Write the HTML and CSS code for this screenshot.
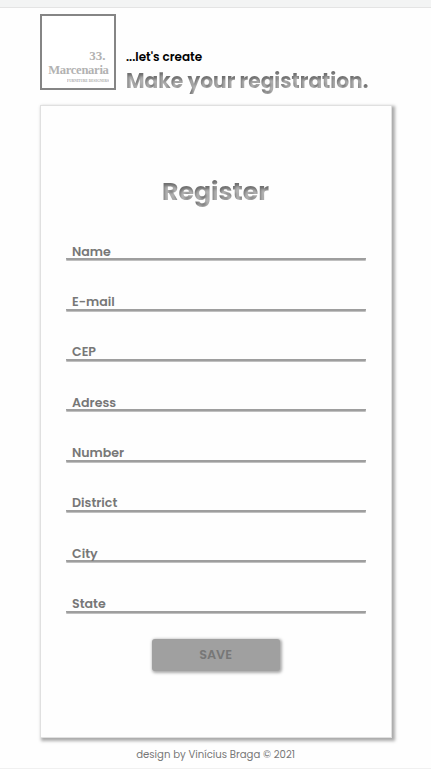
FILE: index.html
```html
<!DOCTYPE html>
<html lang="en">
<head>
<meta charset="utf-8">
<meta name="viewport" content="width=device-width, initial-scale=1">
<title>Marcenaria - Register</title>
<link rel="stylesheet" href="styles.css">
</head>
<body>
<div class="topbar"></div>
<div class="page">
  <header class="header">
    <div class="logo">
      <span class="logo-number">33.</span>
      <span class="logo-name">Marcenaria</span>
      <svg class="logo-tag" viewBox="0 0 42 4"><text x="0" y="3.2" textLength="42" lengthAdjust="spacingAndGlyphs">FURNITURE DESIGNERS</text></svg>
    </div>
    <div class="intro">
      <p class="lead">...let's create</p>
      <h1 class="title"><span>Make your registration.</span></h1>
    </div>
  </header>
  <main class="card">
    <h2 class="heading"><span>Register</span></h2>
    <form class="form">
      <div class="field"><label>Name</label></div>
      <div class="field"><label>E-mail</label></div>
      <div class="field"><label>CEP</label></div>
      <div class="field"><label>Adress</label></div>
      <div class="field"><label>Number</label></div>
      <div class="field"><label>District</label></div>
      <div class="field"><label>City</label></div>
      <div class="field"><label>State</label></div>
      <button class="save" type="button">SAVE</button>
    </form>
  </main>
  <footer class="footer">design by Vinícius Braga © 2021</footer>
</div>
<div class="baseline"></div>
</body>
</html>
```
FILE: styles.css
```css
* { box-sizing: border-box; margin: 0; padding: 0; }
body {
  height: 769px;
  overflow: hidden;
  background: #fefefe;
  font-family: Poppins, Inter, sans-serif;
  color: #777;
}
.topbar { height: 8px; background: #f3f4f4; border-bottom: 1px solid #e4e4e4; }
.page { height: 760px; width: 352px; margin-left: 39.6px; }
.baseline { height: 1px; background: #f0f0f0; }
.header { display: flex; height: 97px; padding-top: 6px; }
.logo {
  width: 76px;
  height: 76px;
  border: 2px solid #858585;
  background: #fff;
  display: flex;
  flex-direction: column;
  align-items: flex-end;
  padding: 32px 5px 0 0;
  font-family: "Liberation Serif", serif;
  font-weight: 700;
  color: #b2b2b2;
}
.logo-number { font-size: 13px; line-height: 15px; padding-right: 3px; }
.logo-name { font-size: 12.6px; line-height: 14px; letter-spacing: -.3px; }
.logo-tag { width: 42px; height: 4px; margin-top: 2px; font-size: 3px; fill: #aaa; }
.intro { margin-left: 10.4px; padding-top: 34px; white-space: nowrap; }
.lead { font-size: 12px; line-height: 18px; font-weight: 600; color: #000; }
.title { font-size: 20.2px; line-height: 31px; font-weight: 700; }
.title span, .heading span {
  display: inline-block;
  background: #6e6e6e;
  -webkit-background-clip: text;
  background-clip: text;
  color: transparent;
  text-shadow: 1px 3px 3px rgba(255, 255, 255, .5);
}
.card {
  height: 633px;
  border: 1px solid #e0e0e0;
  background: #fefefe;
  box-shadow: 2px 2px 3px 1px #aaa;
  padding: 69px 25px 0;
}
.heading { text-align: center; font-size: 25.2px; line-height: 34px; font-weight: 700; }
.form { display: flex; flex-direction: column; padding-top: 1px; }
.field {
  height: 50.35px;
  display: flex;
  align-items: flex-end;
  border-bottom: 2px solid #9e9e9e;
  border-radius: 1px;
  box-shadow: 0 1px 0 #c0c0c0;
  padding-left: 6.4px;
}
.field label { font-size: 12.6px; line-height: 13.6px; font-weight: 600; }
.save {
  width: 128px;
  height: 32px;
  margin: 26px auto 0;
  border: 0;
  border-radius: 3px;
  background: #a0a0a0;
  box-shadow: 1px 1px 3px 1px #aaa;
  font: 600 12.8px Poppins, Inter, sans-serif;
  color: #777;
}
.footer { text-align: center; font-size: 10.15px; line-height: 16px; padding-top: 9px; }
```
